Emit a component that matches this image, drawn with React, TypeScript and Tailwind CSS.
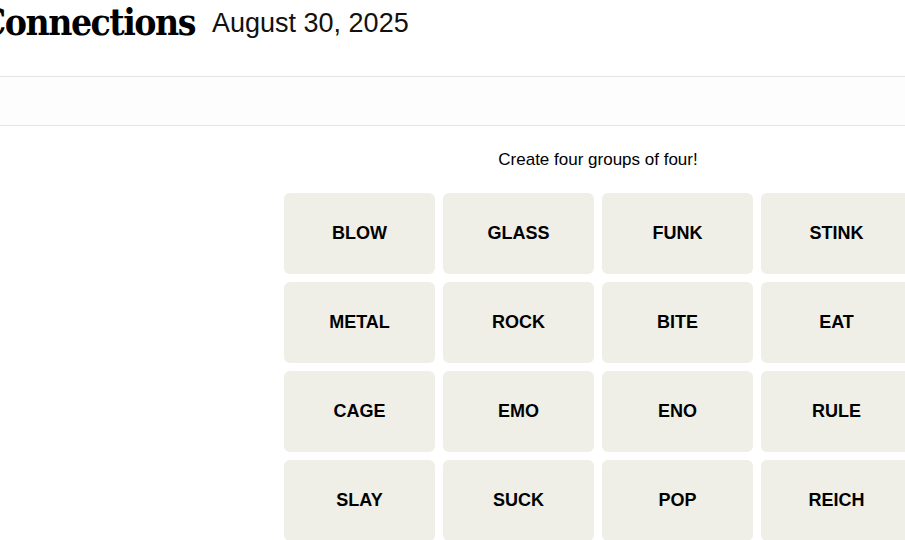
const words = [
  'BLOW', 'GLASS', 'FUNK', 'STINK',
  'METAL', 'ROCK', 'BITE', 'EAT',
  'CAGE', 'EMO', 'ENO', 'RULE',
  'SLAY', 'SUCK', 'POP', 'REICH',
];

function Tile({ word }: { word: string }) {
  return (
    <button className="h-[81px] w-[151px] shrink-0 rounded-md bg-[#efefe8] flex items-center justify-center text-[18px] font-bold text-black font-['Liberation_Sans',Arial,sans-serif]">
      {word}
    </button>
  );
}

export default function App() {
  return (
    <div className="w-[905px] h-[540px] overflow-hidden bg-white">
      <header className="h-[77px] border-b border-[#e4e4e4] flex items-start">
        <div className="w-[195px] flex justify-end whitespace-nowrap">
          <h1 className="text-[37px] leading-[44px] font-black text-black font-['DejaVu_Serif_Condensed','DejaVu_Serif',serif] [font-stretch:condensed] tracking-[-1.5px]">
            Connections
          </h1>
        </div>
        <span className="ml-[17px] mt-[5px] text-[27px] leading-[36px] text-[#111] font-['Liberation_Sans',Arial,sans-serif] whitespace-nowrap">
          August 30, 2025
        </span>
      </header>
      <div className="h-[49px] bg-[#fdfdfd] border-b border-[#e4e4e4]" />
      <main className="pl-[284px]">
        <p className="w-[628px] text-center pt-[22px] text-[17px] leading-[24px] text-black font-['Liberation_Sans',Arial,sans-serif]">
          Create four groups of four!
        </p>
        <div className="mt-[21px] grid grid-cols-[repeat(4,151px)] gap-x-[8px] gap-y-[8px] w-[628px]">
          {words.map(w => <Tile key={w} word={w} />)}
        </div>
      </main>
    </div>
  );
}
